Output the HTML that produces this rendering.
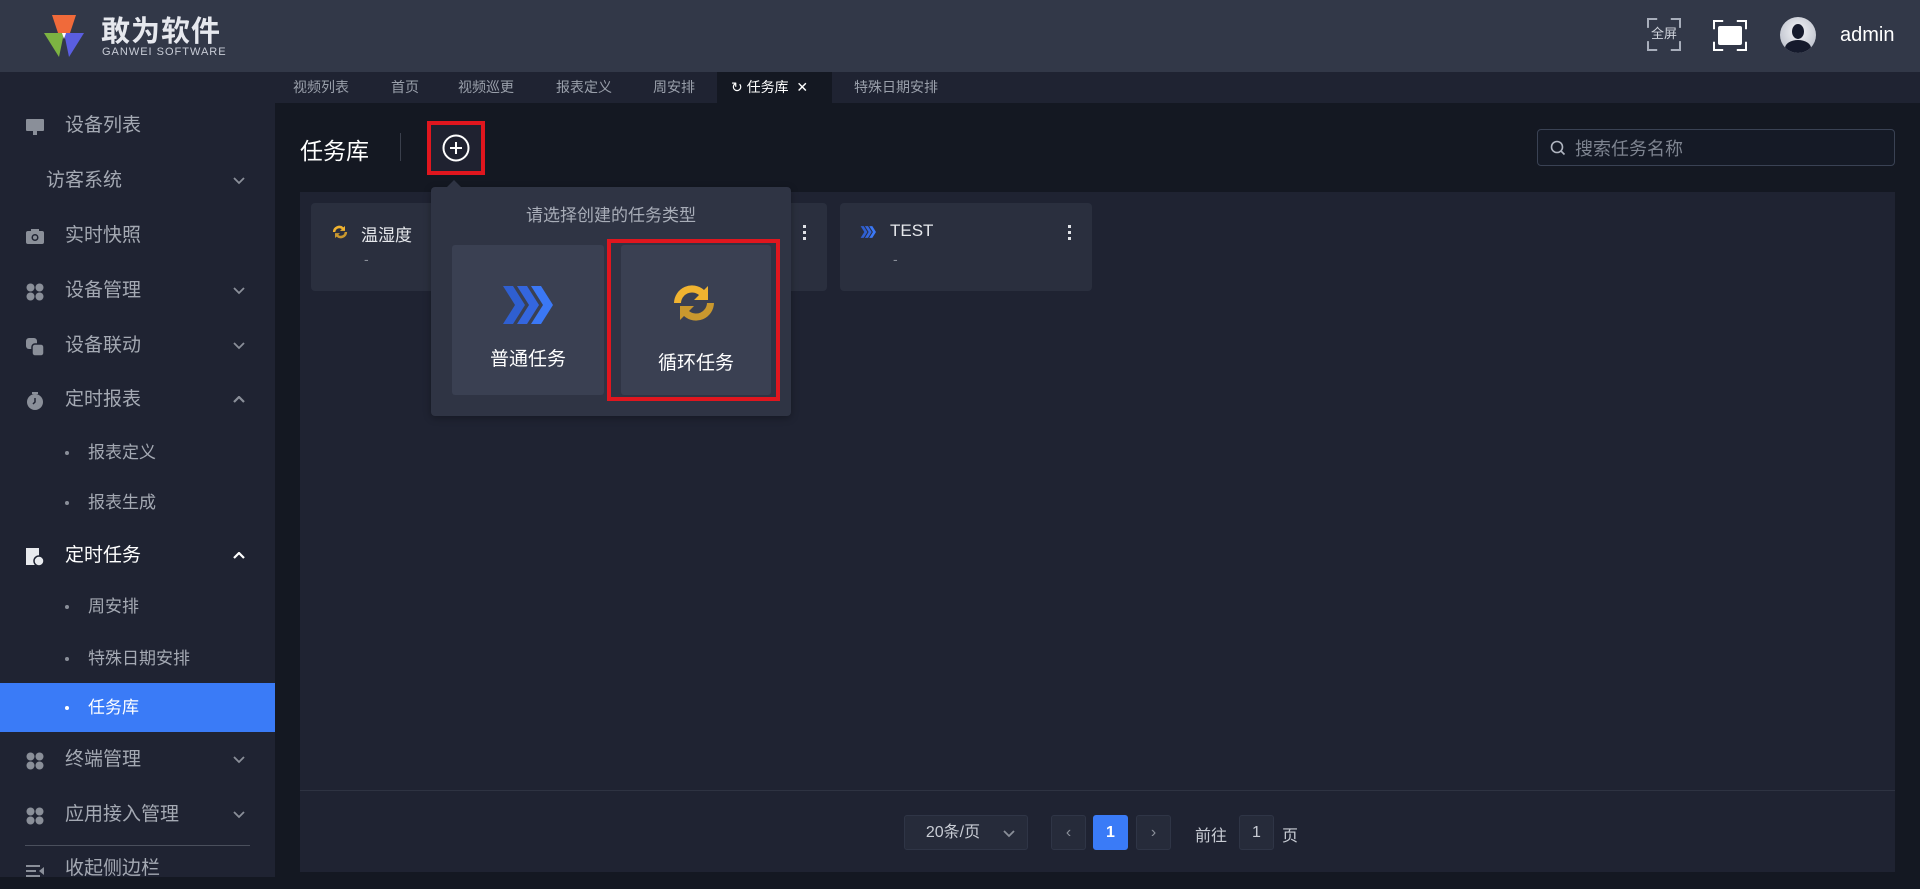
<!DOCTYPE html>
<html><head><meta charset="utf-8"><style>
*{margin:0;padding:0;box-sizing:border-box}
body{width:1920px;height:877px;overflow:hidden;background:#141822;font-family:"Liberation Sans","Noto Sans CJK SC",sans-serif;position:relative;color:#c8ccd4}
.a{position:absolute}
#hdr{left:0;top:0;width:1920px;height:72px;background:#323848}
#side{left:0;top:72px;width:275px;height:805px;background:#1f2332}
#tabs{left:275px;top:72px;width:1645px;height:31px;background:#1f2332}
.tab{position:absolute;top:0;height:31px;line-height:31px;font-size:14px;color:#9aa0ab}
.si{position:absolute;left:0;width:275px;font-size:19px;color:#a4a9b3;height:40px;line-height:40px}
.si .ic{position:absolute;left:26px;top:12px}
.si .t{position:absolute;left:65px}
.si .ch{position:absolute;left:233px;top:16px}
.sub{position:absolute;left:0;width:275px;height:49px;line-height:49px;font-size:17px;color:#a4a9b3}
.sub .d{position:absolute;left:65px;top:23px;width:4px;height:4px;border-radius:50%;background:#8a8f99}
.sub .t{position:absolute;left:88px}
.card{position:absolute;top:203px;width:252px;height:88px;background:#2a2f3e;border-radius:4px}
.card .t{position:absolute;left:50px;top:18px;font-size:17px;color:#e6e8ec}
.card .m{position:absolute;left:53px;top:48px;font-size:14px;color:#8a8f99}
.dots{position:absolute;right:20px;top:22px;width:4px}
.dots i{display:block;width:3px;height:3px;background:#e0e2e6;margin-bottom:3px}
.pbox{position:absolute;top:815px;height:35px;background:#262b3a;border:1px solid #2f3546;border-radius:3px;text-align:center;line-height:33px;font-size:16px;color:#c8ccd4}
</style></head><body>
<svg width="0" height="0" style="position:absolute">
 <defs>
  <g id="dn"><polyline points="1,1 6,6 11,1" fill="none" stroke="#8a8f99" stroke-width="1.8"/></g>
  <g id="up"><polyline points="1,6 6,1 11,6" fill="none" stroke="currentColor" stroke-width="2.2"/></g>
  <g id="four"><circle cx="4.5" cy="4.5" r="4" fill="#8a8f99"/><circle cx="13.5" cy="4.5" r="4" fill="#8a8f99"/><circle cx="4.5" cy="13.5" r="4" fill="#8a8f99"/><circle cx="13.5" cy="13.5" r="4" fill="#8a8f99"/></g>
 </defs>
</svg>
<div id="hdr" class="a">
 <svg class="a" style="left:40px;top:13px" width="48" height="46" viewBox="0 0 48 46">
  <path d="M12 2 L36 2 L30 20 L18 20Z" fill="#f06a3a"/>
  <path d="M4 20 L24 20 L19 44 Z" fill="#7db342"/>
  <path d="M24 20 L44 20 L29 44 Z" fill="#5a5ee0"/>
  <path d="M22 20 L26 20 L24 26Z" fill="#fff"/>
 </svg>
 <div class="a" style="left:101px;top:8px;font-size:29px;font-weight:bold;color:#e6e8ee;letter-spacing:1px">敢为软件</div>
 <div class="a" style="left:102px;top:46px;font-size:11px;color:#c8ccd6;letter-spacing:1px">GANWEI SOFTWARE</div>
 <div class="a" style="left:1647px;top:18px;width:34px;height:33px;border:2px solid #a8aebb;clip-path:polygon(0 0,30% 0,30% 100%,70% 100%,70% 0,100% 0,100% 30%,0 30%,0 70%,100% 70%,100% 100%,0 100%)"></div>
 <div class="a" style="left:1647px;top:18px;width:34px;height:33px;font-size:13px;color:#d0d4dc;line-height:31px;text-align:center">全屏</div>
 <div class="a" style="left:1713px;top:20px;width:34px;height:31px;border:2px solid #fff;clip-path:polygon(0 0,30% 0,30% 100%,70% 100%,70% 0,100% 0,100% 30%,0 30%,0 70%,100% 70%,100% 100%,0 100%)"></div>
 <div class="a" style="left:1718px;top:26px;width:24px;height:19px;background:#fff;border-radius:2px"></div>
 <div class="a" style="left:1780px;top:17px;width:36px;height:36px;border-radius:50%;background:radial-gradient(circle at 50% 40%,#f4f5f8,#aeb3c0);overflow:hidden">
  <div class="a" style="left:12px;top:7px;width:12px;height:15px;border-radius:50%;background:#151a2c"></div>
  <div class="a" style="left:5px;top:23px;width:26px;height:16px;border-radius:50% 50% 0 0;background:#151a2c"></div>
 </div>
 <div class="a" style="left:1840px;top:24px;font-size:20px;color:#fff">admin</div>
</div>
<div id="side" class="a">
 <div class="si" style="top:34px"><svg class="ic" width="18" height="18"><rect x="0" y="1" width="18" height="12" rx="1" fill="#8a8f99"/><rect x="7" y="13" width="4" height="4" fill="#8a8f99"/></svg><span class="t">设备列表</span></div>
 <div class="si" style="top:89px"><span class="t" style="left:46px">访客系统</span><svg class="ch" width="12" height="8"><use href="#dn"/></svg></div>
 <div class="si" style="top:144px"><svg class="ic" width="18" height="18"><rect x="0" y="3" width="18" height="13" rx="2" fill="#8a8f99"/><rect x="5" y="1" width="8" height="3" fill="#8a8f99"/><circle cx="9" cy="9.5" r="3.5" fill="#1f2332"/><circle cx="9" cy="9.5" r="2" fill="#8a8f99"/></svg><span class="t">实时快照</span></div>
 <div class="si" style="top:199px"><svg class="ic" width="18" height="18"><use href="#four"/></svg><span class="t">设备管理</span><svg class="ch" width="12" height="8"><use href="#dn"/></svg></div>
 <div class="si" style="top:254px"><svg class="ic" width="18" height="18"><rect x="0" y="0" width="11" height="11" rx="3" fill="#8a8f99"/><rect x="6" y="6" width="12" height="12" rx="3" fill="#8a8f99" stroke="#1f2332" stroke-width="1.5"/></svg><span class="t">设备联动</span><svg class="ch" width="12" height="8"><use href="#dn"/></svg></div>
 <div class="si" style="top:308px"><svg class="ic" width="18" height="18"><circle cx="9" cy="10" r="8" fill="#8a8f99"/><rect x="6" y="0" width="6" height="2" fill="#8a8f99"/><path d="M9 6v4l-2 2" stroke="#1f2332" stroke-width="1.5" fill="none"/></svg><span class="t">定时报表</span><svg class="ch" width="12" height="8" style="color:#8a8f99"><use href="#up"/></svg></div>
 <div class="sub" style="top:356px"><span class="d"></span><span class="t">报表定义</span></div>
 <div class="sub" style="top:406px"><span class="d"></span><span class="t">报表生成</span></div>
 <div class="si" style="top:464px;color:#fff"><svg class="ic" width="18" height="18"><rect x="0" y="0" width="13" height="17" fill="#e8eaee"/><circle cx="13" cy="13" r="5" fill="#e8eaee" stroke="#1f2332" stroke-width="1.5"/></svg><span class="t">定时任务</span><svg class="ch" width="12" height="8" style="color:#fff"><use href="#up"/></svg></div>
 <div class="sub" style="top:510px"><span class="d"></span><span class="t">周安排</span></div>
 <div class="sub" style="top:562px"><span class="d"></span><span class="t">特殊日期安排</span></div>
 <div class="sub" style="top:611px;background:#3a7bf7;color:#fff"><span class="d" style="background:#fff"></span><span class="t">任务库</span></div>
 <div class="si" style="top:668px"><svg class="ic" width="18" height="18"><use href="#four"/></svg><span class="t">终端管理</span><svg class="ch" width="12" height="8"><use href="#dn"/></svg></div>
 <div class="si" style="top:723px"><svg class="ic" width="18" height="18"><use href="#four"/></svg><span class="t">应用接入管理</span><svg class="ch" width="12" height="8"><use href="#dn"/></svg></div>
 <div class="a" style="left:25px;top:773px;width:225px;height:1px;background:#4a4f5c"></div>
 <div class="si" style="top:777px"><svg class="ic" width="18" height="18" style="top:16px"><rect x="0" y="0" width="14" height="2" fill="#8a8f99"/><rect x="0" y="5" width="10" height="2" fill="#8a8f99"/><rect x="0" y="10" width="14" height="2" fill="#8a8f99"/><path d="M18 2l-5 4 5 4z" fill="#8a8f99"/></svg><span class="t">收起侧边栏</span></div>
</div>
<div id="tabs" class="a">
 <div class="tab" style="left:18px">视频列表</div>
 <div class="tab" style="left:116px">首页</div>
 <div class="tab" style="left:183px">视频巡更</div>
 <div class="tab" style="left:281px">报表定义</div>
 <div class="tab" style="left:378px">周安排</div>
 <div class="tab" style="left:442px;width:115px;background:#141822;color:#fff;padding-left:14px">↻ 任务库 &nbsp;✕</div>
 <div class="tab" style="left:579px">特殊日期安排</div>
</div>
<div class="a" style="left:300px;top:132px;font-size:23px;color:#fff">任务库</div>
<div class="a" style="left:400px;top:133px;width:1px;height:28px;background:#3a3f4c"></div>
<div class="a" style="left:427px;top:121px;width:58px;height:54px;border:4px solid #e0161e;background:#1f2230"></div>
<svg class="a" style="left:441px;top:133px" width="30" height="30" viewBox="0 0 30 30"><circle cx="15" cy="15" r="12.5" fill="none" stroke="#fff" stroke-width="2"/><path d="M15 9v12M9 15h12" stroke="#fff" stroke-width="2"/></svg>
<div class="a" style="left:1537px;top:129px;width:358px;height:37px;border:1px solid #3a4254;border-radius:4px;background:#151a26"></div>
<svg class="a" style="left:1549px;top:139px" width="18" height="18" viewBox="0 0 18 18"><circle cx="8" cy="8" r="5.5" fill="none" stroke="#b0b5c0" stroke-width="1.6"/><path d="M12 12l3.5 3.5" stroke="#b0b5c0" stroke-width="1.6"/></svg>
<div class="a" style="left:1575px;top:135px;font-size:18px;color:#7e8490">搜索任务名称</div>
<div class="a" style="left:300px;top:192px;width:1595px;height:680px;background:#1f2332"></div>
<div class="a" style="left:300px;top:790px;width:1595px;height:1px;background:#2e3342"></div>
<svg width="0" height="0" style="position:absolute"><defs>
 <g id="cyc"><path d="M8 22a18 18 0 0 1 30-13l4-4v14H28l5-5A11 11 0 0 0 15 22z" fill="#f0b330"/><path d="M48 22a18 18 0 0 1-30 13l-4 4V25h14l-5 5A11 11 0 0 0 41 22z" fill="#c9982e"/></g>
 <g id="chev"><path d="M2 0h10l12 19-12 19H2l12-19z" fill="#2f5fd0"/><path d="M16 0h10l12 19-12 19H16l12-19z" fill="#3466de"/><path d="M30 0h10l12 19-12 19H30l12-19z" fill="#3b78f5"/></g>
</defs></svg>
<div class="card" style="left:311px"><svg class="a" style="left:19px;top:21px" width="20" height="16" viewBox="0 0 56 44"><use href="#cyc"/></svg><span class="t">温湿度</span><span class="m">-</span></div>
<div class="card" style="left:575px"><div class="dots"><i></i><i></i><i></i></div></div>
<div class="card" style="left:840px"><svg class="a" style="left:20px;top:23px" width="16" height="12" viewBox="0 0 52 38"><use href="#chev"/></svg><span class="t">TEST</span><span class="m">-</span><div class="dots"><i></i><i></i><i></i></div></div>
<div class="a" style="left:431px;top:187px;width:360px;height:229px;background:#2f3444;border-radius:4px;box-shadow:0 2px 8px rgba(0,0,0,.3)"></div>
<div class="a" style="left:447px;top:180px;width:0;height:0;border-left:7px solid transparent;border-right:7px solid transparent;border-bottom:7px solid #2f3444"></div>
<div class="a" style="left:431px;top:201px;width:360px;text-align:center;font-size:17px;color:#a8adb8">请选择创建的任务类型</div>
<div class="a" style="left:452px;top:245px;width:152px;height:150px;background:#3a4052;border-radius:3px"></div>
<svg class="a" style="left:501px;top:286px" width="52" height="38" viewBox="0 0 52 38"><use href="#chev"/></svg>
<div class="a" style="left:452px;top:344px;width:152px;text-align:center;font-size:19px;color:#fff">普通任务</div>
<div class="a" style="left:607px;top:239px;width:173px;height:162px;border:4px solid #e0161e"></div>
<div class="a" style="left:621px;top:245px;width:150px;height:150px;background:#3a4052;border-radius:3px"></div>
<svg class="a" style="left:666px;top:281px" width="56" height="44" viewBox="0 0 56 44"><use href="#cyc"/></svg>
<div class="a" style="left:621px;top:348px;width:150px;text-align:center;font-size:19px;color:#fff">循环任务</div>
<div class="pbox" style="left:904px;width:124px;padding-right:26px">20条/页<svg class="a" style="right:12px;top:14px" width="12" height="8"><use href="#dn"/></svg></div>
<div class="pbox" style="left:1051px;width:35px;color:#8a8f99">‹</div>
<div class="pbox" style="left:1093px;width:35px;background:#3a7bf7;border-color:#3a7bf7;color:#fff;font-weight:bold">1</div>
<div class="pbox" style="left:1136px;width:35px;color:#8a8f99">›</div>
<div class="a" style="left:1195px;top:822px;font-size:16px;color:#c8ccd4">前往</div>
<div class="pbox" style="left:1239px;width:35px">1</div>
<div class="a" style="left:1282px;top:822px;font-size:16px;color:#c8ccd4">页</div>
</body></html>
